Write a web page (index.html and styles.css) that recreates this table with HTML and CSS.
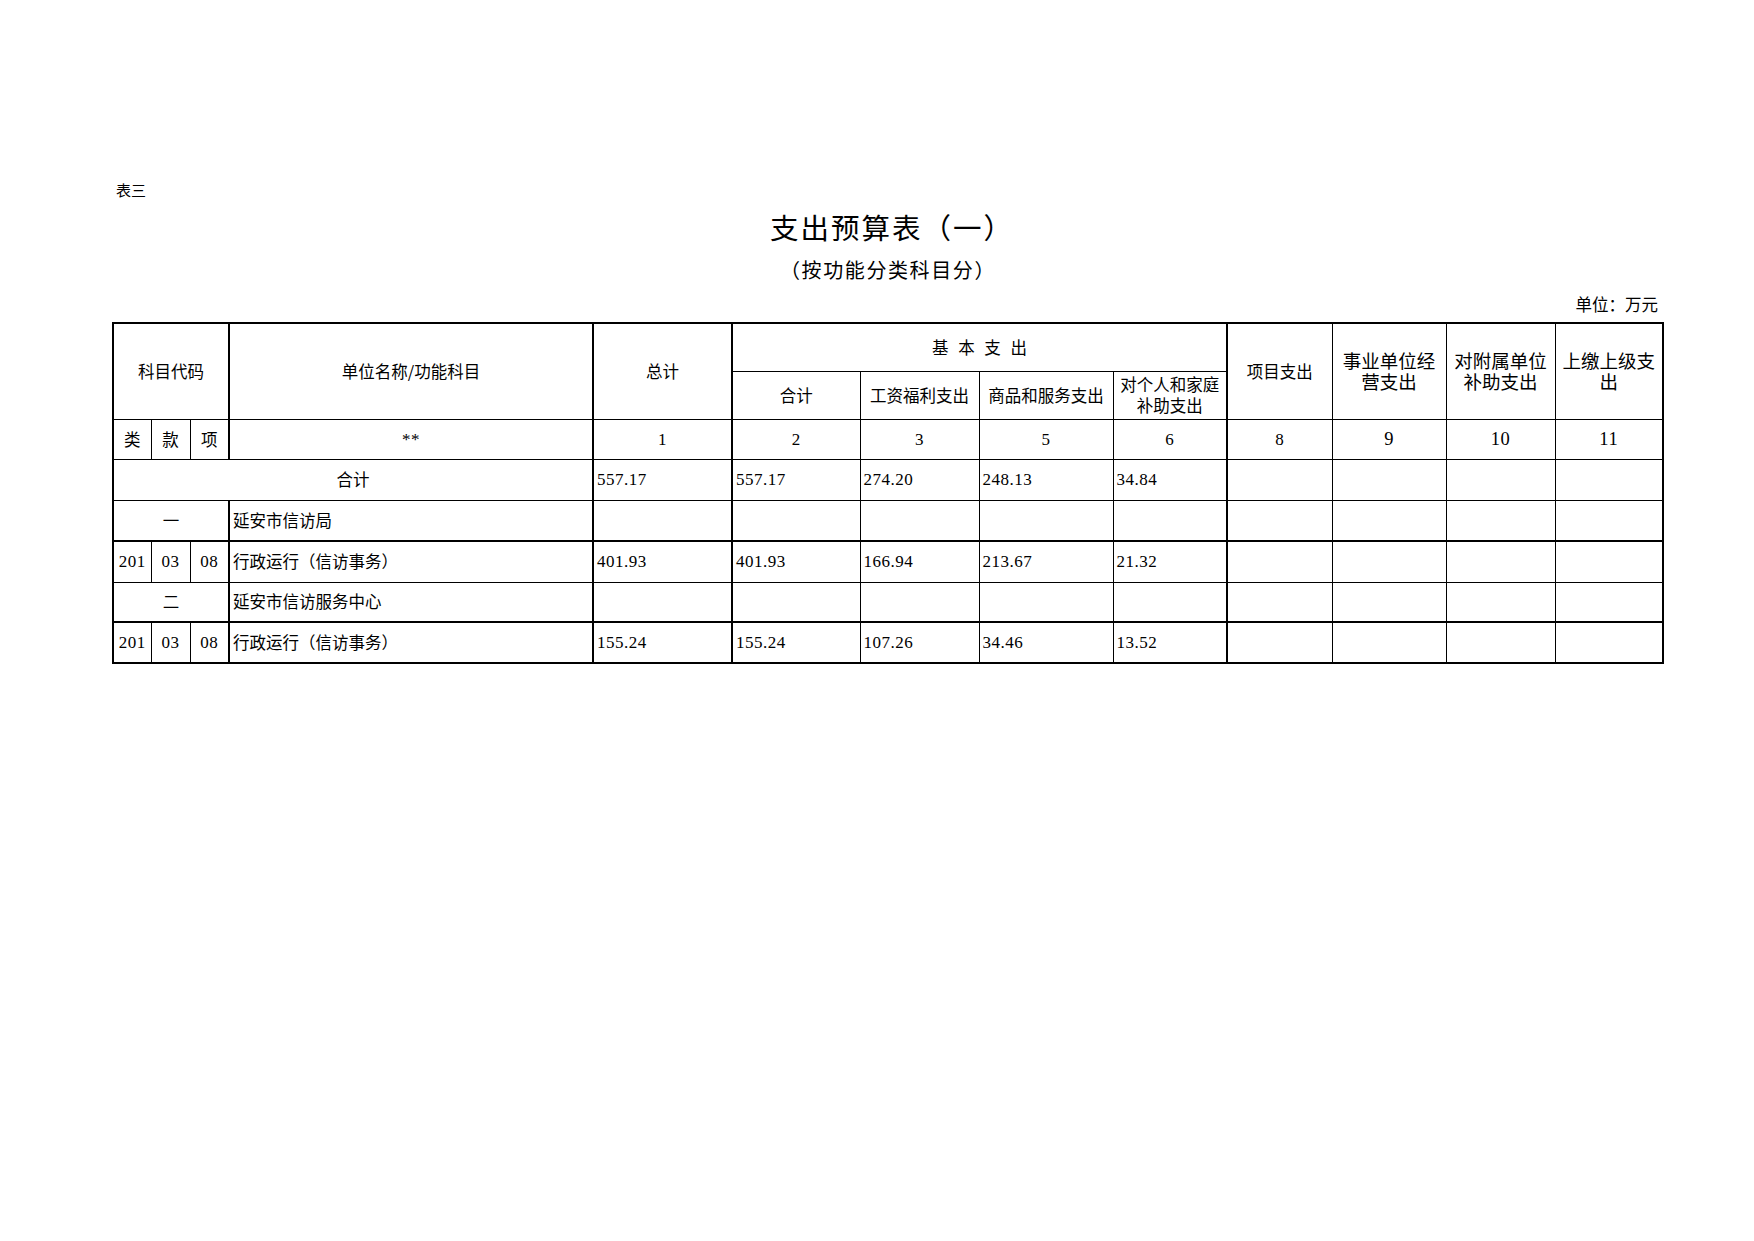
FILE: index.html
```html
<!DOCTYPE html>
<html lang="zh-CN">
<head>
<meta charset="utf-8">
<title>支出预算表（一）</title>
<link rel="stylesheet" href="styles.css">
</head>
<body>
<div class="page">
  <div class="label">表三</div>
  <h1 class="title">支出预算表（一）</h1>
  <div class="subtitle">（按功能分类科目分）</div>
  <div class="unit">单位：万元</div>
  <table class="budget">
    <colgroup>
      <col class="w38"><col class="w39"><col class="w39"><col class="w364"><col class="w139"><col class="w128"><col class="w119"><col class="w134"><col class="w114"><col class="w105"><col class="w114"><col class="w109"><col class="w108">
    </colgroup>
    <tr class="h48">
      <td colspan="3" rowspan="2">科目代码</td>
      <td rowspan="2" class="bl2">单位名称/功能科目</td>
      <td rowspan="2" class="bl2">总计</td>
      <td colspan="4" class="bl2 spaced">基 本 支 出</td>
      <td rowspan="2" class="bl2">项目支出</td>
      <td rowspan="2" class="big"><span class="ln">事业单位经</span><span class="ln">营支出</span></td>
      <td rowspan="2" class="big"><span class="ln">对附属单位</span><span class="ln">补助支出</span></td>
      <td rowspan="2" class="big"><span class="ln">上缴上级支</span><span class="ln">出</span></td>
    </tr>
    <tr class="h48">
      <td class="bl2">合计</td>
      <td>工资福利支出</td>
      <td>商品和服务支出</td>
      <td><span class="ln">对个人和家庭</span><span class="ln">补助支出</span></td>
    </tr>
    <tr class="h40">
      <td>类</td><td>款</td><td>项</td>
      <td class="bl2 num">**</td>
      <td class="bl2 num">1</td>
      <td class="bl2 num">2</td>
      <td class="num">3</td>
      <td class="num">5</td>
      <td class="num">6</td>
      <td class="bl2 num">8</td>
      <td class="num big">9</td>
      <td class="num big">10</td>
      <td class="num big">11</td>
    </tr>
    <tr class="h41">
      <td colspan="4">合计</td>
      <td class="bl2 num left">557.17</td>
      <td class="bl2 num left">557.17</td>
      <td class="num left">274.20</td>
      <td class="num left">248.13</td>
      <td class="num left">34.84</td>
      <td class="bl2"></td><td></td><td></td><td></td>
    </tr>
    <tr class="h41 bb2">
      <td colspan="3">一</td>
      <td class="bl2 left">延安市信访局</td>
      <td class="bl2"></td><td class="bl2"></td><td></td><td></td><td></td>
      <td class="bl2"></td><td></td><td></td><td></td>
    </tr>
    <tr class="h41">
      <td class="num">201</td><td class="num">03</td><td class="num">08</td>
      <td class="bl2 left">行政运行（信访事务）</td>
      <td class="bl2 num left">401.93</td>
      <td class="bl2 num left">401.93</td>
      <td class="num left">166.94</td>
      <td class="num left">213.67</td>
      <td class="num left">21.32</td>
      <td class="bl2"></td><td></td><td></td><td></td>
    </tr>
    <tr class="h40 bb2">
      <td colspan="3">二</td>
      <td class="bl2 left">延安市信访服务中心</td>
      <td class="bl2"></td><td class="bl2"></td><td></td><td></td><td></td>
      <td class="bl2"></td><td></td><td></td><td></td>
    </tr>
    <tr class="h41">
      <td class="num">201</td><td class="num">03</td><td class="num">08</td>
      <td class="bl2 left">行政运行（信访事务）</td>
      <td class="bl2 num left">155.24</td>
      <td class="bl2 num left">155.24</td>
      <td class="num left">107.26</td>
      <td class="num left">34.46</td>
      <td class="num left">13.52</td>
      <td class="bl2"></td><td></td><td></td><td></td>
    </tr>
  </table>
</div>
</body>
</html>
```

FILE: styles.css
```css
* { box-sizing: border-box; }

body {
  margin: 0;
  background: #fff;
  color: #000;
  font-family: "Noto Sans CJK SC", sans-serif;
}

.page {
  padding: 180px 0 0 112px;
  width: 1662px;
}

.label {
  font-size: 15px;
  line-height: 20px;
  padding-left: 4px;
}

.title {
  margin: 7px 0 0;
  font-weight: 400;
  font-size: 28.5px;
  line-height: 40px;
  text-align: center;
  letter-spacing: 2px;
  padding-left: 10px;
}

.subtitle {
  margin-top: 8px;
  font-size: 20px;
  line-height: 30px;
  text-align: center;
  letter-spacing: 1.6px;
  padding-left: 2px;
}

.unit {
  margin-top: 9px;
  font-size: 16.5px;
  line-height: 20px;
  text-align: right;
  padding-right: 4px;
}

.budget {
  margin-top: 8px;
  border-collapse: collapse;
  table-layout: fixed;
  width: 1550px;
  border: 2px solid #000;
}

.w38 { width: 38px; }
.w39 { width: 39px; }
.w364 { width: 364px; }
.w139 { width: 139px; }
.w128 { width: 128px; }
.w119 { width: 119px; }
.w134 { width: 134px; }
.w114 { width: 114px; }
.w105 { width: 105px; }
.w109 { width: 109px; }
.w108 { width: 108px; }

.h48 { height: 48px; }
.h41 { height: 41px; }
.h40 { height: 40px; }

.budget td {
  border: 1px solid #000;
  padding: 0 2px;
  text-align: center;
  vertical-align: middle;
  font-size: 16.5px;
  line-height: 21px;
  white-space: nowrap;
  overflow: hidden;
}

.budget td .ln {
  display: block;
  height: 21px;
}

.budget td.bl2 { border-left-width: 2px; }
.budget tr.bb2 td { border-bottom-width: 2px; }

.budget td.left {
  text-align: left;
  padding-left: 3px;
}

.budget td.num {
  font-family: "Liberation Serif", "Noto Sans CJK SC", serif;
  font-size: 17px;
  letter-spacing: 0.5px;
}

.budget td.big {
  font-size: 18.5px;
  line-height: 21px;
}

.budget td.big .ln {
  height: 21px;
  line-height: 21px;
}

.budget td.num.big {
  font-size: 18.5px;
}

.budget td.spaced {
  word-spacing: 6px;
}
```
